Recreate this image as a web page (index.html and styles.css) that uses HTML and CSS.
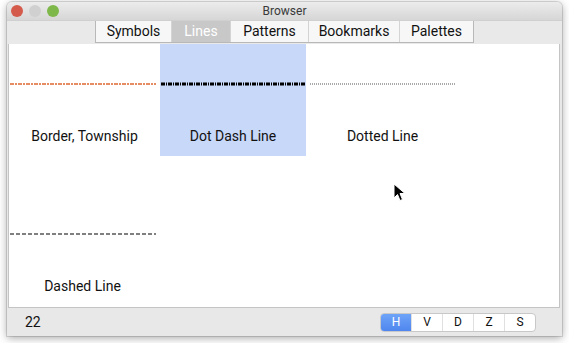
FILE: index.html
```html
<!DOCTYPE html>
<html lang="en">
<head>
    <meta charset="UTF-8">
    <title>Browser</title>
    <link rel="stylesheet" href="styles.css">
</head>
<body>
    <div class="window">
        <div class="titlebar">
            <div class="lights">
                <span class="light red"></span>
                <span class="light grey"></span>
                <span class="light green"></span>
            </div>
            <div class="title">Browser</div>
        </div>
        <div class="toolbar">
            <div class="tabs">
                <div class="tab w-symbols">Symbols</div>
                <div class="tab w-lines active">Lines</div>
                <div class="tab w-patterns">Patterns</div>
                <div class="tab w-bookmarks">Bookmarks</div>
                <div class="tab w-palettes">Palettes</div>
            </div>
        </div>
        <div class="content">
            <div class="grid">
                <div class="cell">
                    <svg class="sample" width="147" height="4"><line x1="1" y1="2" x2="147" y2="2" stroke="#e58c63" stroke-width="2" stroke-dasharray="4 1 2 1"/></svg>
                    <div class="label">Border, Township</div>
                </div>
                <div class="cell selected">
                    <svg class="sample" width="147" height="4"><line x1="1" y1="2" x2="146" y2="2" stroke="#000" stroke-width="3" stroke-dasharray="4 1 1 1"/></svg>
                    <div class="label">Dot Dash Line</div>
                </div>
                <div class="cell">
                    <svg class="sample" width="153" height="4"><line x1="4" y1="2" x2="150" y2="2" stroke="#555" stroke-width="1" stroke-dasharray="1 1"/></svg>
                    <div class="label">Dotted Line</div>
                </div>
                <div class="cell tall">
                    <svg class="sample" width="147" height="4"><line x1="1" y1="2" x2="148" y2="2" stroke="#000" stroke-width="1" stroke-dasharray="4 2"/></svg>
                    <div class="label">Dashed Line</div>
                </div>
            </div>
        </div>
        <div class="statusbar">
            <div class="count">22</div>
            <div class="segs">
                <div class="seg on">H</div>
                <div class="seg">V</div>
                <div class="seg">D</div>
                <div class="seg">Z</div>
                <div class="seg">S</div>
            </div>
        </div>
    </div>
    <svg class="cursor" width="14" height="20" viewBox="0 0 14 20"><path d="M1 1 L1 15 L4.5 11.5 L7 17.5 L9.5 16.5 L7 10.5 L12 10.5 Z" fill="#000" stroke="#fff" stroke-width="1"/></svg>
</body>
</html>
```
FILE: styles.css
```css
body {
    margin: 0;
    background: #fff;
    font-family: Roboto, "Liberation Sans", sans-serif;
    width: 569px;
    height: 343px;
    overflow: hidden;
}

.window {
    margin: 2px 0 0 7px;
    width: 555px;
    height: 334px;
    background: #e8e8e8;
    border-radius: 5px 5px 0 0;
    box-shadow: 0 2px 8px rgba(0, 0, 0, 0.35), 0 0 0 1px rgba(0, 0, 0, 0.12);
    display: flex;
    flex-direction: column;
    overflow: hidden;
}

.titlebar {
    height: 18px;
    background: linear-gradient(#ececec, #d6d6d6);
    position: relative;
    display: flex;
    align-items: center;
    justify-content: center;
}

.lights {
    position: absolute;
    left: 4px;
    top: 3px;
    display: flex;
    gap: 6px;
}

.light {
    width: 12px;
    height: 12px;
    border-radius: 50%;
}

.red { background: #d45a4b; }
.grey { background: #d0d0d0; }
.green { background: #7fb84a; }

.title {
    font-size: 12px;
    color: #3a3a3a;
}

.toolbar {
    height: 23px;
    background: #e9e9e9;
    display: flex;
    padding-left: 88px;
    border-top: 1px solid #d0d0d0;
}

.tabs {
    display: flex;
    height: 21px;
    border: 1px solid #b8b8b8;
    border-top: none;
    background: #f7f7f7;
}

.tab {
    font-size: 14px;
    color: #111;
    display: flex;
    align-items: center;
    justify-content: center;
    padding-bottom: 2px;
    border-left: 1px solid #d4d4d4;
}

.tab:first-child { border-left: none; }

.w-symbols { width: 75px; }
.w-lines { width: 58px; }
.w-patterns { width: 77px; }
.w-bookmarks { width: 90px; }
.w-palettes { width: 73px; }

.tab.active {
    background: #c8c8c8;
    color: #fff;
}

.content {
    flex: 1;
    background: #fff;
    margin: 0 2px 0 1px;
    border-left: 1px solid #c4c4c4;
    border-right: 1px solid #c4c4c4;
    border-bottom: 1px solid #c4c4c4;
}

.grid {
    display: grid;
    grid-template-columns: 151px 146px 153px;
    grid-template-rows: 112px 149px;
}

.cell {
    display: flex;
    flex-direction: column;
    align-items: center;
    padding-top: 38px;
}

.cell.selected {
    background: #c8d8f8;
    align-items: flex-start;
}

.cell:first-child .sample,
.cell.tall .sample { align-self: flex-start; }

.label {
    font-size: 14px;
    color: #111;
    margin-top: 42px;
    text-align: center;
    align-self: center;
}

.cell.tall {
    padding-top: 76px;
}

.cell.tall .label {
    margin-top: 42px;
    margin-right: 4px;
}

.statusbar {
    height: 28px;
    display: flex;
    align-items: center;
    justify-content: space-between;
    padding: 0 26px 0 18px;
}

.count {
    font-size: 14px;
    color: #111;
}

.segs {
    display: flex;
    height: 17px;
    border: 1px solid #c8c8c8;
    border-radius: 4px;
    background: #fff;
    overflow: hidden;
}

.seg {
    width: 30px;
    display: flex;
    align-items: center;
    justify-content: center;
    font-size: 12px;
    color: #111;
    border-left: 1px solid #e0e0e0;
}

.seg:first-child { border-left: none; }

.seg.on {
    background: linear-gradient(#6ea4f8, #4f86ee);
    color: #fff;
}

.cursor {
    position: absolute;
    left: 393px;
    top: 183px;
}
```
